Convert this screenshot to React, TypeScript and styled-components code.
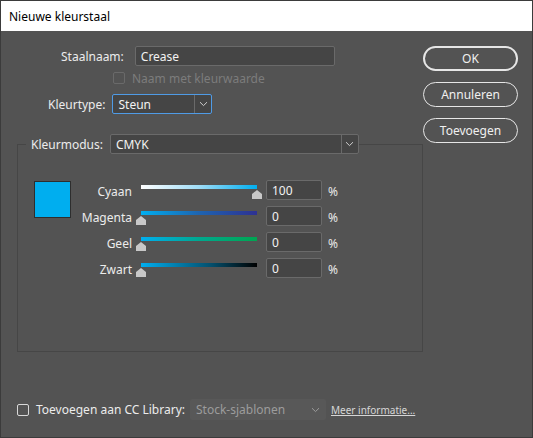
import React, { FC } from 'react';
import styled, { createGlobalStyle } from 'styled-components';


const uiFont = '"Noto Sans", "Open Sans", sans-serif';

const GlobalStyle = createGlobalStyle`
  html, body {
    margin: 0;
    padding: 0;
    background: #535353;
  }
  * {
    box-sizing: border-box;
  }
`;

const Window = styled.div({
  width: '533px',
  height: '438px',
  display: 'flex',
  flexDirection: 'column',
  background: '#535353',
  border: '1px solid #3b3b3b',
  fontFamily: uiFont,
  fontSize: '12px',
  color: '#e8e8e8',
  overflow: 'hidden',
});

const TitleBar = styled.div({
  height: '30px',
  flexShrink: 0,
  display: 'flex',
  alignItems: 'center',
  paddingLeft: '8px',
  paddingTop: '1px',
  background: '#ffffff',
  color: '#000000',
  fontSize: '12px',
});

const Body = styled.div({
  display: 'flex',
  flex: 1,
});

const Main = styled.div({
  width: '421px',
  display: 'flex',
  flexDirection: 'column',
  paddingTop: '15px',
});

const Field = styled.div<{ $indent: number }>(({ $indent }) => ({
  display: 'flex',
  alignItems: 'center',
  height: '20px',
  paddingLeft: `${$indent}px`,
}));

const Label = styled.span<{ $gap?: number }>(({ $gap = 7 }) => ({
  marginRight: `${$gap}px`,
  color: '#ececec',
  whiteSpace: 'nowrap',
}));

const TextInput = styled.div<{ $width: number }>(({ $width }) => ({
  width: `${$width}px`,
  height: '20px',
  display: 'flex',
  alignItems: 'center',
  paddingLeft: '5px',
  background: '#454545',
  border: '1px solid #6a6a6a',
  borderRadius: '2px',
  color: '#f2f2f2',
}));

const Select = styled.div<{ $width: number; $focused?: boolean }>(({ $width, $focused }) => ({
  width: `${$width}px`,
  height: '20px',
  display: 'flex',
  alignItems: 'stretch',
  background: '#454545',
  border: `1px solid ${$focused ? '#4f9be6' : '#6a6a6a'}`,
  borderRadius: '2px',
  color: '#f2f2f2',
}));

const SelectValue = styled.span({
  flex: 1,
  display: 'flex',
  alignItems: 'center',
  paddingLeft: '5px',
});

const SelectArrow = styled.span({
  width: '17px',
  display: 'flex',
  alignItems: 'center',
  justifyContent: 'center',
  borderLeft: '1px solid #6a6a6a',
});

const Checkbox = styled.span<{ $disabled?: boolean }>(({ $disabled }) => ({
  width: '12px',
  height: '12px',
  flexShrink: 0,
  border: `1px solid ${$disabled ? '#6a6a6a' : '#d8d8d8'}`,
  borderRadius: '2px',
  marginRight: '7px',
}));

const CheckRow = styled.div({
  display: 'flex',
  alignItems: 'center',
  height: '16px',
  marginTop: '4px',
  paddingLeft: '112px',
  color: '#7c7c7c',
});

const GroupBox = styled.fieldset({
  margin: '20px 0 0 16px',
  padding: 0,
  width: '406px',
  height: '218px',
  border: '1px solid #464646',
  borderRadius: '0',
});

const Legend = styled.legend({
  padding: '0 0 0 5px',
  marginLeft: '8px',
});

const ColorArea = styled.div({
  display: 'flex',
  alignItems: 'flex-start',
  padding: '26px 0 0 16px',
});

const Swatch = styled.div<{ $color: string }>(({ $color }) => ({
  width: '37px',
  height: '37px',
  background: $color,
  border: '1px solid #2e2e2e',
  marginTop: '1px',
}));

const Sliders = styled.div({
  display: 'flex',
  flexDirection: 'column',
  gap: '6px',
});

const SliderRow = styled.div({
  display: 'grid',
  gridTemplateColumns: '70px 125px 56px auto',
  alignItems: 'center',
  height: '20px',
});

const SliderLabel = styled.span({
  textAlign: 'right',
  paddingRight: '9px',
  paddingTop: '3px',
  color: '#ececec',
});

const Track = styled.div({
  position: 'relative',
  height: '20px',
  marginRight: '9px',
});

const TrackBar = styled.div<{ $gradient: string }>(({ $gradient }) => ({
  position: 'absolute',
  left: 0,
  right: 0,
  top: '5px',
  height: '4px',
  background: $gradient,
}));

const Thumb = styled.svg({
  position: 'absolute',
  top: '10px',
  marginLeft: '-5px',
});

const NumberBox = styled.div({
  width: '56px',
  height: '20px',
  display: 'flex',
  alignItems: 'center',
  paddingLeft: '5px',
  background: '#454545',
  border: '1px solid #6a6a6a',
  borderRadius: '2px',
  color: '#f2f2f2',
});

const Unit = styled.span({
  paddingLeft: '6px',
  paddingTop: '2px',
});

const Buttons = styled.div({
  display: 'flex',
  flexDirection: 'column',
  gap: '11px',
  paddingTop: '15px',
  paddingLeft: '1px',
});

const PillButton = styled.button<{ $primary?: boolean }>(({ $primary }) => ({
  width: '95px',
  height: '25px',
  background: 'transparent',
  border: `${$primary ? 2 : 1.5}px solid #e6e6e6`,
  borderRadius: '13px',
  color: '#f0f0f0',
  fontFamily: uiFont,
  fontSize: '12px',
  padding: 0,
}));

const Footer = styled.div({
  display: 'flex',
  alignItems: 'center',
  height: '21px',
  margin: '0 0 17px 16px',
});

const FooterLabel = styled.span({
  marginRight: '5px',
  color: '#ececec',
});

const DisabledSelect = styled.div({
  width: '136px',
  height: '21px',
  display: 'flex',
  alignItems: 'center',
  justifyContent: 'space-between',
  padding: '0 6px',
  background: '#585858',
  borderRadius: '2px',
  color: '#9c9c9c',
});

const MoreLink = styled.a({
  marginLeft: '5px',
  fontSize: '10px',
  color: '#d6d6d6',
  textDecoration: 'underline',
});

const Chevron: FC<{ color?: string }> = ({ color = '#cfcfcf' }) => (
  <svg width="9" height="6" viewBox="0 0 9 6">
    <path d="M1 1.2 L4.5 4.6 L8 1.2" fill="none" stroke={color} strokeWidth="1" />
  </svg>
);

const CYAN = '#00aeef';

const channels = [
  { name: 'Cyaan', value: 100, gradient: `linear-gradient(to right, #ffffff, #9fdcf6 50%, ${CYAN})` },
  { name: 'Magenta', value: 0, gradient: `linear-gradient(to right, ${CYAN}, #1e64b0 50%, #2e3192)` },
  { name: 'Geel', value: 0, gradient: `linear-gradient(to right, ${CYAN}, #00a88f 50%, #00a651)` },
  { name: 'Zwart', value: 0, gradient: `linear-gradient(to right, ${CYAN}, #04506e 60%, #000000)` },
];

const App: FC = () => (
  <>
    <GlobalStyle />
    <Window>
      <TitleBar>Nieuwe kleurstaal</TitleBar>
      <Body>
        <Main>
          <Field $indent={60}>
            <Label $gap={11}>Staalnaam:</Label>
            <TextInput $width={200}>Crease</TextInput>
          </Field>
          <CheckRow>
            <Checkbox $disabled />
            Naam met kleurwaarde
          </CheckRow>
          <Field $indent={47} style={{ marginTop: '8px' }}>
            <Label>Kleurtype:</Label>
            <Select $width={100} $focused>
              <SelectValue>Steun</SelectValue>
              <SelectArrow><Chevron /></SelectArrow>
            </Select>
          </Field>
          <GroupBox>
            <Legend>
              <Field $indent={0}>
                <Label>Kleurmodus:</Label>
                <Select $width={249}>
                  <SelectValue>CMYK</SelectValue>
                  <SelectArrow><Chevron /></SelectArrow>
                </Select>
              </Field>
            </Legend>
            <ColorArea>
              <Swatch $color={CYAN} />
              <Sliders>
                {channels.map((c) => (
                  <SliderRow key={c.name}>
                    <SliderLabel>{c.name}</SliderLabel>
                    <Track>
                      <TrackBar $gradient={c.gradient} />
                      <Thumb width="10" height="9" viewBox="0 0 10 9" style={{ left: `${c.value}%` }}>
                        <path d="M0 4 L5 0 L10 4 L10 9 L0 9 Z" fill="#c8c8c8" />
                      </Thumb>
                    </Track>
                    <NumberBox>{c.value}</NumberBox>
                    <Unit>%</Unit>
                  </SliderRow>
                ))}
              </Sliders>
            </ColorArea>
          </GroupBox>
        </Main>
        <Buttons>
          <PillButton $primary>OK</PillButton>
          <PillButton>Annuleren</PillButton>
          <PillButton>Toevoegen</PillButton>
        </Buttons>
      </Body>
      <Footer>
        <Checkbox />
        <FooterLabel>Toevoegen aan CC Library:</FooterLabel>
        <DisabledSelect>
          Stock-sjablonen
          <Chevron color="#9c9c9c" />
        </DisabledSelect>
        <MoreLink>Meer informatie...</MoreLink>
      </Footer>
    </Window>
  </>
);

export default App;
